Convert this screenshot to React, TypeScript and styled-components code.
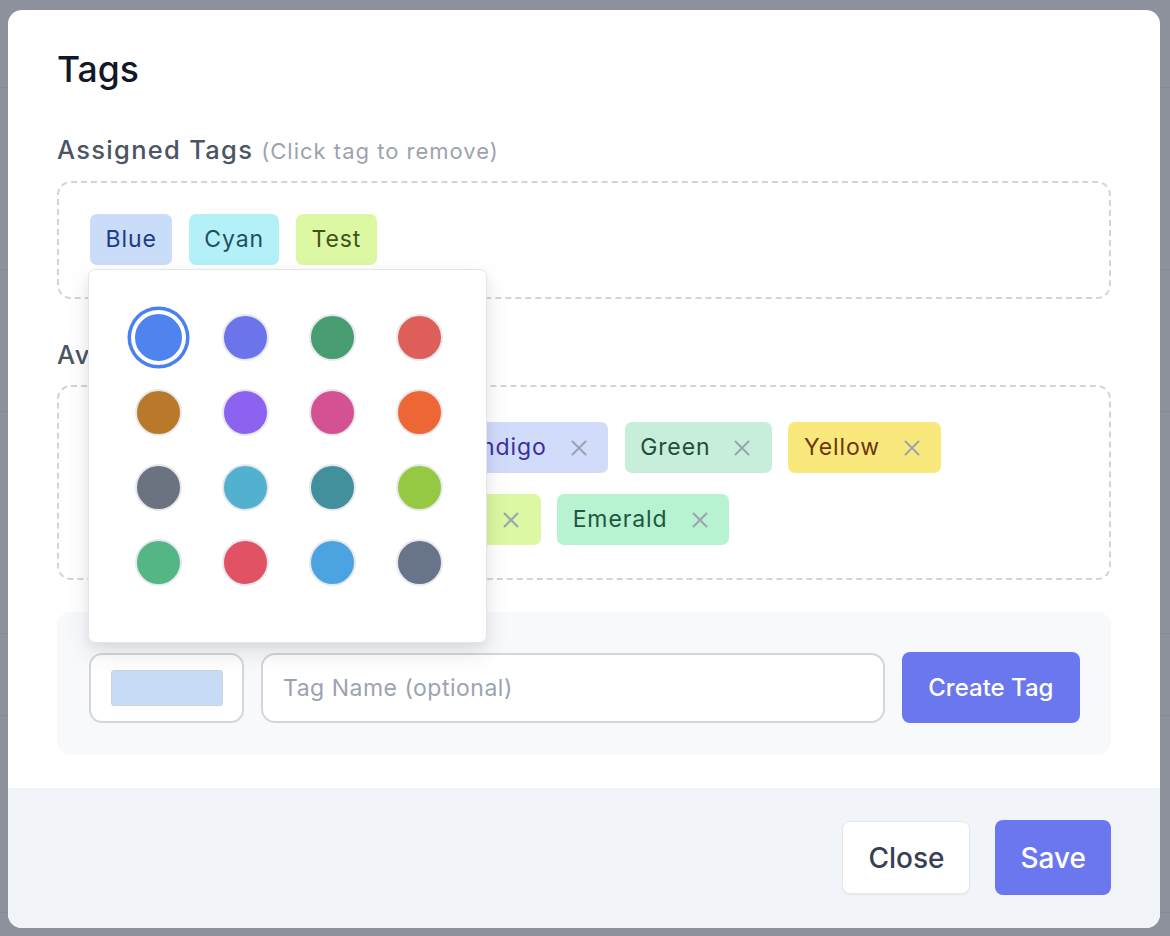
import React from "react";
import styled, { createGlobalStyle } from "styled-components";

const GlobalStyle = createGlobalStyle`
  * { box-sizing: border-box; }
  html, body { margin: 0; padding: 0; }
  body {
    font-family: Inter, "Noto Sans", "Liberation Sans", sans-serif;
    background: #8d919b;
    -webkit-font-smoothing: antialiased;
  }
`;

const Screen = styled.div`
  position: relative;
  width: 1170px;
  height: 936px;
  overflow: hidden;
  background: #8d919b;
`;

const UnderPage = styled.div`
  position: absolute;
  inset: 0;
  display: flex;
  flex-direction: column;
  pointer-events: none;
`;

const UnderRow = styled.div<{ $h: number }>`
  height: ${(p) => p.$h}px;
  flex: none;
  border-bottom: 1px solid #878b95;
`;

const Overlay = styled.div`
  position: absolute;
  inset: 0;
  padding: 10px 10px 8px 8px;
  display: flex;
`;

const Modal = styled.div`
  flex: 1;
  background: #ffffff;
  border-radius: 14px;
  display: flex;
  flex-direction: column;
  overflow: hidden;
`;

const Body = styled.div`
  padding: 42px 49px 33px 49px;
  display: flex;
  flex-direction: column;
`;

const Title = styled.h2`
  margin: 0;
  font-size: 35.5px;
  line-height: 36px;
  font-weight: 500;
  color: #111827;
`;

const SectionLabel = styled.div<{ $mt: number }>`
  margin-top: ${(p) => p.$mt}px;
  font-size: 25.5px;
  line-height: 32px;
  font-weight: 500;
  letter-spacing: 1.3px;
  color: #4b5563;
  display: flex;
  align-items: baseline;
  gap: 8px;
`;

const Hint = styled.span`
  font-size: 22px;
  font-weight: 400;
  letter-spacing: 1px;
  color: #9ca3af;
`;

const TagBox = styled.div<{ $mt: number; $pt: number; $pb: number }>`
  position: relative;
  margin-top: ${(p) => p.$mt}px;
  border: 2px dashed #d1d5db;
  border-radius: 14px;
  padding: ${(p) => p.$pt}px 31px ${(p) => p.$pb}px 31px;
  display: flex;
  flex-wrap: wrap;
  column-gap: 16.5px;
  row-gap: 21px;
`;

const Tag = styled.div<{ $bg: string; $fg: string }>`
  display: inline-flex;
  align-items: center;
  height: 51px;
  padding: 0 15.5px;
  border-radius: 7px;
  background: ${(p) => p.$bg};
  color: ${(p) => p.$fg};
  font-size: 23px;
  line-height: 33px;
  font-weight: 400;
  letter-spacing: 0.9px;
  white-space: nowrap;
`;

const RemoveBtn = styled.span`
  display: inline-flex;
  margin-left: 24px;
  margin-right: 6px;
  color: #9ca3af;
`;

const Popover = styled.div`
  position: absolute;
  left: 29px;
  top: 86px;
  width: 399px;
  height: 374px;
  background: #ffffff;
  border: 1.5px solid #e3e6eb;
  border-radius: 7px;
  box-shadow: 0 10px 25px rgba(15, 23, 42, 0.1), 0 4px 10px rgba(15, 23, 42, 0.05);
  padding: 30px 24px 0 26px;
  display: grid;
  grid-template-columns: repeat(4, 87px);
  grid-auto-rows: 75px;
  align-content: start;
  z-index: 5;
`;

const SwatchCell = styled.div`
  display: flex;
  align-items: center;
  justify-content: center;
`;

const Swatch = styled.div<{ $c: string; $sel?: boolean }>`
  width: 47px;
  height: 47px;
  border-radius: 50%;
  background: ${(p) => p.$c};
  border: 2px solid #e7e8ec;
  box-shadow: ${(p) => (p.$sel ? "0 0 0 4px #ffffff, 0 0 0 7.5px #4a80ef" : "none")};
  ${(p) => (p.$sel ? "border-color: #4f83ee;" : "")}
`;

const CreateSection = styled.div`
  margin-top: 32px;
  background: #f8f9fb;
  border-radius: 14px;
  padding: 40px 31px 32px 32px;
  display: flex;
  align-items: center;
  gap: 17px;
`;

const ColorField = styled.div`
  width: 155px;
  height: 70px;
  flex: none;
  background: #ffffff;
  border: 2px solid #d4d6db;
  border-radius: 13px;
  display: flex;
  align-items: center;
  justify-content: center;
`;

const ColorFill = styled.div<{ $c: string }>`
  width: 112px;
  height: 36px;
  background: ${(p) => p.$c};
  border: 1.5px solid #cdd3dc;
  border-radius: 3px;
`;

const NameInput = styled.input`
  flex: 1;
  min-width: 0;
  height: 70px;
  border: 2px solid #d4d6db;
  border-radius: 14px;
  background: #ffffff;
  padding: 0 20px;
  font-family: inherit;
  font-size: 23px;
  letter-spacing: 0.5px;
  color: #111827;
  outline: none;
  &::placeholder { color: #9ca3af; }
`;

const PrimaryButton = styled.button<{ $size: number; $h: number; $px: number }>`
  flex: none;
  height: ${(p) => p.$h}px;
  padding: 0 ${(p) => p.$px}px;
  border: none;
  border-radius: 8px;
  background: #6b77ee;
  color: #ffffff;
  font-family: inherit;
  font-size: ${(p) => p.$size}px;
  font-weight: 500;
  cursor: pointer;
`;

const Footer = styled.div`
  flex: 1;
  background: #f1f4f9;
  padding: 32px 49px 33px 49px;
  display: flex;
  justify-content: flex-end;
  align-items: flex-start;
  gap: 25px;
`;

const SecondaryButton = styled.button`
  height: 73px;
  margin-top: 1px;
  padding: 0 25px;
  border: 1.5px solid #e5e7eb;
  border-radius: 8px;
  background: #ffffff;
  color: #374151;
  font-family: inherit;
  font-size: 28px;
  font-weight: 500;
  box-shadow: 0 1px 2px rgba(0, 0, 0, 0.05);
  cursor: pointer;
`;

const XIcon = () => (
  <svg width="16" height="16" viewBox="0 0 16 16" fill="none" stroke="currentColor" strokeWidth="2" strokeLinecap="round">
    <path d="M1.5 1.5 L14.5 14.5 M14.5 1.5 L1.5 14.5" />
  </svg>
);

const assigned = [
  { name: "Blue", bg: "#c9dcf8", fg: "#1e3a8a" },
  { name: "Cyan", bg: "#b3f0f8", fg: "#1f4f5f" },
  { name: "Test", bg: "#ddf8a3", fg: "#3f5418" },
];

const available = [
  { name: "Mustard", bg: "#fbe7a8", fg: "#7a4a10" },
  { name: "Orange", bg: "#fde0c6", fg: "#8a3a12" },
  { name: "Indigo", bg: "#d1dbfa", fg: "#3b2f9e" },
  { name: "Green", bg: "#c6eedb", fg: "#1f4d39" },
  { name: "Yellow", bg: "#f9e97c", fg: "#6b3513" },
  { name: "Amber", bg: "#fde7b0", fg: "#7a4310" },
  { name: "Gold", bg: "#fbeec0", fg: "#7a5510" },
  { name: "Lime", bg: "#ddf8a3", fg: "#3f5418" },
  { name: "Emerald", bg: "#b7f2d1", fg: "#1d5740" },
];

const swatches = [
  "#4f83ee", "#6b74eb", "#489c72", "#de5f5a",
  "#b87a2a", "#8b63f0", "#d45193", "#ed6736",
  "#6b7280", "#52b1cf", "#42909c", "#96c943",
  "#54b585", "#e05264", "#4ca3e2", "#68748a",
];

const underRows = [88, 182, 142, 222, 82, 197];

export default function App() {
  return (
    <>
      <GlobalStyle />
      <Screen>
        <UnderPage>
          {underRows.map((h, i) => (
            <UnderRow key={i} $h={h} />
          ))}
        </UnderPage>
        <Overlay>
          <Modal>
            <Body>
              <Title>Tags</Title>

              <SectionLabel $mt={46}>
                Assigned Tags <Hint>(Click tag to remove)</Hint>
              </SectionLabel>
              <TagBox $mt={14} $pt={31} $pb={32}>
                {assigned.map((t) => (
                  <Tag key={t.name} $bg={t.bg} $fg={t.fg}>
                    {t.name}
                  </Tag>
                ))}
                <Popover>
                  {swatches.map((c, i) => (
                    <SwatchCell key={c + i}>
                      <Swatch $c={c} $sel={i === 0} />
                    </SwatchCell>
                  ))}
                </Popover>
              </TagBox>

              <SectionLabel $mt={40}>
                Available Tags <Hint>(Click tag to add)</Hint>
              </SectionLabel>
              <TagBox $mt={13} $pt={35} $pb={33}>
                {available.map((t) => (
                  <Tag key={t.name} $bg={t.bg} $fg={t.fg}>
                    {t.name}
                    <RemoveBtn>
                      <XIcon />
                    </RemoveBtn>
                  </Tag>
                ))}
              </TagBox>

              <CreateSection>
                <ColorField>
                  <ColorFill $c="#c7dbf7" />
                </ColorField>
                <NameInput placeholder="Tag Name (optional)" />
                <PrimaryButton $size={24} $h={71} $px={26.5}>
                  Create Tag
                </PrimaryButton>
              </CreateSection>
            </Body>
            <Footer>
              <SecondaryButton>Close</SecondaryButton>
              <PrimaryButton $size={28} $h={75} $px={25}>
                Save
              </PrimaryButton>
            </Footer>
          </Modal>
        </Overlay>
      </Screen>
    </>
  );
}
